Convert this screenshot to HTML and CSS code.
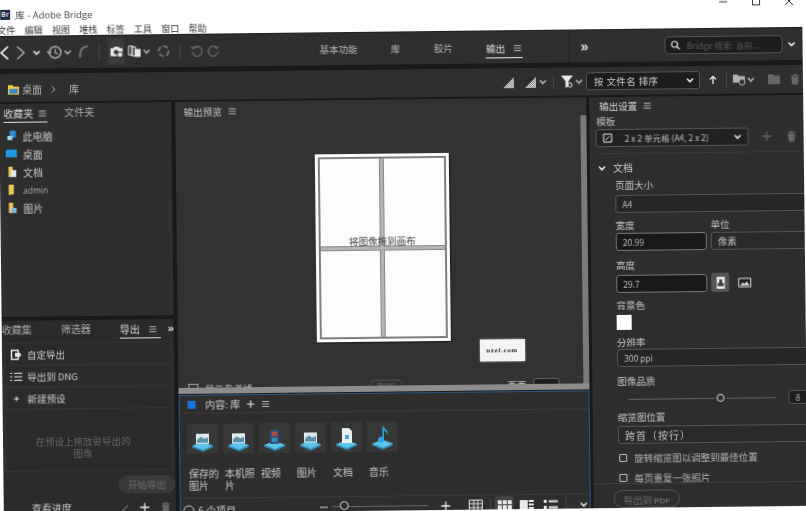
FILE: index.html
```html
<!DOCTYPE html>
<html lang="zh-CN">
<head>
    <meta charset="UTF-8">
    <title>库 - Adobe Bridge</title>
    <link rel="stylesheet" href="styles.css">
</head>
<body>
    <svg class="sprite" width="0" height="0">
        <defs>
            <pattern id="dither" width="2" height="2" patternUnits="userSpaceOnUse"><rect width="2" height="2" fill="#8a8a8a"/><rect width="1" height="1" fill="#d8d8d8"/><rect x="1" y="1" width="1" height="1" fill="#d8d8d8"/></pattern>
        </defs>
        <symbol id="chev" viewBox="0 0 10 10"><path d="M2 3.5 5 6.5 8 3.5" fill="none" stroke="currentColor" stroke-width="1.6"/></symbol>
        <symbol id="menu" viewBox="0 0 10 10"><path d="M1.5 2.5h7M1.5 5h7M1.5 7.5h7" fill="none" stroke="currentColor"/></symbol>
        <symbol id="plus" viewBox="0 0 12 12"><path d="M6 1.5v9M1.5 6h9" fill="none" stroke="currentColor" stroke-width="1.3"/></symbol>
        <symbol id="trash" viewBox="0 0 12 14"><path d="M1 3h10M4.5 3V1.5h3V3M2.2 4.5h7.6L9 13H3z" fill="currentColor" stroke="currentColor" stroke-width=".8"/></symbol>
        <symbol id="tile-base" viewBox="0 0 31 30"><path d="M5 22 15 18l11 4-10 4.5z" fill="#5cc4ec"/><path d="M5 22l11 4.5L26 22v1.5L16 28 5 23.5z" fill="#2b97c9"/></symbol>
    </svg>

    <div class="window">
        <div class="titlebar">
            <div class="title-row">
                <span class="app-badge">Br</span>
                <span>库 - Adobe Bridge</span>
            </div>
            <div class="menu-row">
                <span>文件</span><span>编辑</span><span>视图</span><span>堆栈</span><span>标签</span><span>工具</span><span>窗口</span><span>帮助</span>
            </div>
            <div class="win-controls">
                <svg width="10" height="10" viewBox="0 0 10 10"><path d="M1 5h8" stroke="#333"/></svg>
                <svg width="10" height="10" viewBox="0 0 10 10"><rect x="1.5" y="1.5" width="7" height="7" fill="none" stroke="#333"/></svg>
                <svg width="10" height="10" viewBox="0 0 10 10"><path d="M1 1l8 8M9 1l-8 8" stroke="#333"/></svg>
            </div>
        </div>

        <div class="toolbar">
            <div class="tools">
                <svg class="ic w16 bright" viewBox="0 0 10 14"><path d="M8 1.5 2 7l6 5.5" fill="none" stroke="currentColor" stroke-width="1.5"/></svg>
                <svg class="ic w16" viewBox="0 0 10 14"><path d="M2 1.5 8 7l-6 5.5" fill="none" stroke="currentColor" stroke-width="1.2"/></svg>
                <svg class="ic w10 bright"><use href="#chev"/></svg>
                <svg class="ic w16 hist" viewBox="0 0 14 14"><circle cx="7.5" cy="7" r="5" fill="none" stroke="currentColor" stroke-width="1.3"/><path d="M7.5 4v3.3l2.3 1.3M0 6l2.4 2L4 6" fill="none" stroke="currentColor"/></svg>
                <svg class="ic w10"><use href="#chev"/></svg>
                <svg class="ic w16 dim curve" viewBox="0 0 14 14"><path d="M11 2C6 2 3 6 4 12" fill="none" stroke="currentColor" stroke-width="1.8"/></svg>
                <span class="tool-div first"></span>
                <span class="tool-active">
                    <svg class="ic w14 bright" viewBox="0 0 14 13"><path d="M1 3h3l1-1.5h4L10 3h3v8H1z" fill="currentColor"/><circle cx="6.5" cy="7" r="2.3" fill="#333"/><circle cx="10.5" cy="9.5" r="2.8" fill="currentColor" stroke="#333"/></svg>
                </span>
                <svg class="ic w14 bright copies" viewBox="0 0 14 13"><path d="M1 1h4v9H1zM4 2h4v9H4z" fill="none" stroke="currentColor"/><path d="M7 4h6v8H7z" fill="currentColor"/></svg>
                <svg class="ic w10"><use href="#chev"/></svg>
                <svg class="ic w14 dim sync" viewBox="0 0 14 14"><circle cx="7" cy="7" r="5" fill="none" stroke="currentColor" stroke-width="2" stroke-dasharray="5 2.5"/></svg>
                <span class="tool-div second"></span>
                <svg class="ic w14 dim undo" viewBox="0 0 14 14"><path d="M3.5 4.5a5 5 0 1 1-1 3.5M1.5 2.5l2 2.5 2.5-1.5" fill="none" stroke="currentColor" stroke-width="1.2"/></svg>
                <svg class="ic w14 dim redo" viewBox="0 0 14 14"><path d="M10.5 4.5a5 5 0 1 0 1 3.5M12.5 2.5l-2 2.5L8 3.5" fill="none" stroke="currentColor" stroke-width="1.2"/></svg>
            </div>
            <div class="workspaces">
                <span class="ws">基本功能</span>
                <span class="ws lib">库</span>
                <span class="ws film">胶片</span>
                <span class="ws current">输出 <svg class="ic w10"><use href="#menu"/></svg></span>
            </div>
            <div class="more-cell"><span class="more">»</span></div>
            <div class="search">
                <svg class="ic w10 bright" viewBox="0 0 10 10"><circle cx="4" cy="4" r="3" fill="none" stroke="currentColor" stroke-width="1.2"/><path d="M6 6l3 3" stroke="currentColor" stroke-width="1.2"/></svg>
                <span>Bridge 搜索: 当前...</span>
            </div>
            <svg class="ic w10 bright search-more"><use href="#chev"/></svg>
        </div>

        <div class="pathbar">
            <div class="crumbs">
                <svg class="folder-ic" viewBox="0 0 14 12"><path d="M1 1h5l1 1.5h6V11H1z" fill="#f2c64f"/><rect x="2.5" y="5" width="9" height="5" fill="#2e8fc9"/></svg>
                <span>桌面</span>
                <svg class="ic w10 sep-chev" viewBox="0 0 10 10"><path d="M3.5 2 7 5 3.5 8" fill="none" stroke="currentColor"/></svg>
                <span class="crumb-lib">库</span>
            </div>
            <div class="path-tools">
                <svg class="ic w14 tri" viewBox="0 0 14 14"><path d="M1 13 12 2v11z" fill="url(#dither)"/></svg>
                <svg class="ic w14 tri2" viewBox="0 0 14 14"><path d="M1 13 12 2v11z" fill="url(#dither)"/></svg>
                <svg class="ic w10"><use href="#chev"/></svg>
                <span class="tool-div third"></span>
                <svg class="ic w14 bright" viewBox="0 0 14 14"><path d="M1 1h12L8.5 6.5V12L5.5 13V6.5z" fill="currentColor"/><circle cx="10" cy="10.5" r="2" fill="#2e2e2e" stroke="currentColor"/></svg>
                <svg class="ic w10"><use href="#chev"/></svg>
                <div class="sort-select"><span>按 文件名 排序</span><svg class="ic w10 bright"><use href="#chev"/></svg></div>
                <svg class="ic w10 bright up" viewBox="0 0 10 10"><path d="M5 9V2M2 4.5 5 1.5l3 3" fill="none" stroke="currentColor" stroke-width="1.3"/></svg>
                <span class="tool-div fourth"></span>
                <svg class="ic w14" viewBox="0 0 14 12"><path d="M1 1h5l1 1.5h6V9H1z" fill="currentColor"/><circle cx="10" cy="8.5" r="3" fill="#2e2e2e" stroke="currentColor"/></svg>
                <svg class="ic w10"><use href="#chev"/></svg>
                <svg class="ic w12 dim2 newfolder" viewBox="0 0 12 10"><path d="M0 0h5l1 1.5h6V10H0z" fill="currentColor"/></svg>
                <svg class="ic w12 dim2 pathtrash"><use href="#trash"/></svg>
            </div>
        </div>

        <div class="main">
            <div class="col-left">
                <section class="panel fav-panel">
                    <div class="tabs">
                        <span class="tab current">收藏夹 <svg class="ic w10"><use href="#menu"/></svg></span>
                        <span class="tab">文件夹</span>
                    </div>
                    <ul class="fav-list">
                        <li><svg class="fav-ic" viewBox="0 0 14 14"><path d="M5 1h7v8H5z" fill="#2f8fd4"/><path d="M2 7h6v5H2z" fill="#9fd4f2"/></svg>此电脑</li>
                        <li><svg class="fav-ic" viewBox="0 0 14 14"><rect x="0" y="2" width="13" height="9" fill="#1f9be6"/></svg>桌面</li>
                        <li><svg class="fav-ic" viewBox="0 0 14 14"><path d="M3 1h5v12H3z" fill="#f0c75e"/><path d="M6 5h6v8H6z" fill="#dfeaf5"/></svg>文档</li>
                        <li class="latin"><svg class="fav-ic" viewBox="0 0 14 14"><path d="M3 1h6v11l-6 1z" fill="#f0c75e"/></svg>admin</li>
                        <li><svg class="fav-ic" viewBox="0 0 14 14"><path d="M3 1h5v12H3z" fill="#f0c75e"/><path d="M6 7h6v6H6z" fill="#7fb5e0"/></svg>图片</li>
                    </ul>
                </section>
                <section class="panel export-panel">
                    <div class="tabs lower">
                        <span class="tab">收藏集</span>
                        <span class="tab">筛选器</span>
                        <span class="tab current">导出 <svg class="ic w10"><use href="#menu"/></svg></span>
                        <span class="more small">»</span>
                    </div>
                    <div class="export-box">
                        <div class="export-row"><svg class="ic w12 bright" viewBox="0 0 12 12"><path d="M8 3.5V1.5H1.5v9H8V8.5" fill="none" stroke="currentColor" stroke-width="1.5"/><path d="M5 4h3V2.5L11.5 6 8 9.5V8H5z" fill="currentColor"/></svg>自定导出</div>
                        <div class="export-row"><svg class="ic w12 bright" viewBox="0 0 12 12"><path d="M4 2.5h8M4 6h8M4 9.5h8M0 2.5h2M0 6h2M0 9.5h2" stroke="currentColor"/></svg>导出到 DNG</div>
                        <div class="export-row"><svg class="ic w12 bright" viewBox="0 0 12 12"><path d="M6 3.5v5M3.5 6h5" stroke="currentColor"/></svg>新建预设</div>
                        <p class="export-hint">在预设上拖放要导出的<br>图像</p>
                    </div>
                    <div class="export-action"><span class="pill">开始导出</span></div>
                    <div class="export-foot">
                        <span>查看进度</span>
                        <svg class="ic w10 pencil" viewBox="0 0 10 10"><path d="M2 9 8 3" stroke="currentColor" stroke-width="1.2"/></svg>
                        <svg class="ic w12 bright"><use href="#plus"/></svg>
                        <svg class="ic w12 dim2"><use href="#trash"/></svg>
                    </div>
                </section>
            </div>

            <div class="col-center">
                <section class="panel preview-panel">
                    <div class="panel-head">输出预览 <svg class="ic w10"><use href="#menu"/></svg></div>
                    <div class="canvas">
                        <div class="sheet">
                            <div class="sheet-grid"><i></i><i></i><i></i><i></i></div>
                            <span class="sheet-text">将图像拖到画布</span>
                        </div>
                        <div class="watermark">uzzf.com</div>
                    </div>
                    <div class="preview-foot">
                        <span class="check-dim"></span><span>显示参考线</span>
                        <span class="refresh">刷新</span>
                        <span class="page-label">页面</span><span class="page-box"></span>
                    </div>
                    <div class="scroll-v"></div>
                    <div class="scroll-h"></div>
                </section>
                <section class="content-panel">
                    <div class="content-head">
                        <span class="blue-mark"></span><span>内容: 库</span>
                        <svg class="ic w10 bright"><use href="#plus"/></svg>
                        <svg class="ic w10 head-menu"><use href="#menu"/></svg>
                    </div>
                    <div class="tiles">
                        <div class="tile"><div class="tile-box"><svg viewBox="0 0 31 30"><use href="#tile-base"/><path d="M9 10h13v10H9z" fill="#dfe9ee"/><path d="M10 16l4-3 3 2 4-1v5H10z" fill="#5a8fa5"/></svg></div><span>保存的图片</span></div>
                        <div class="tile"><div class="tile-box"><svg viewBox="0 0 31 30"><use href="#tile-base"/><path d="M9 10h13v10H9z" fill="#dfe9ee"/><path d="M10 16l4-3 3 2 4-1v5H10z" fill="#5a8fa5"/></svg></div><span>本机照片</span></div>
                        <div class="tile"><div class="tile-box"><svg viewBox="0 0 31 30"><use href="#tile-base"/><path d="M11 7h9v14h-9z" fill="#34527c"/><path d="M13 9h5v4h-5z" fill="#b8483b"/><path d="M13 15h5v4h-5z" fill="#2f8ec4"/></svg></div><span>视频</span></div>
                        <div class="tile"><div class="tile-box"><svg viewBox="0 0 31 30"><use href="#tile-base"/><path d="M9 10h13v10H9z" fill="#dfe9ee"/><path d="M10 16l4-3 3 2 4-1v5H10z" fill="#5a8fa5"/></svg></div><span>图片</span></div>
                        <div class="tile"><div class="tile-box"><svg viewBox="0 0 31 30"><use href="#tile-base"/><path d="M11 6h7l3 3v12H11z" fill="#e8f1f6"/><path d="M14 13h4v4h-4z" fill="#4ba6d6"/></svg></div><span>文档</span></div>
                        <div class="tile"><div class="tile-box"><svg viewBox="0 0 31 30"><use href="#tile-base"/><path d="M17 5v13a3 3 0 1 1-1.5-2.5V5z M17 5c1 3 5 4 4 9-1-3-2-4-4-5z" fill="#2ba7e0"/></svg></div><span>音乐</span></div>
                    </div>
                    <div class="content-foot">
                        <svg class="ic w12 ring" viewBox="0 0 12 12"><circle cx="6" cy="6" r="5" fill="none" stroke="currentColor"/></svg>
                        <span class="count">6 个项目</span>
                        <svg class="ic w12 minus" viewBox="0 0 12 12"><path d="M2 6h8" stroke="currentColor" stroke-width="1.3"/></svg>
                        <div class="zoom-slider"><span class="zoom-thumb"></span></div>
                        <svg class="ic w12 bright zoom-plus"><use href="#plus"/></svg>
                        <svg class="ic w14 bright grid-a" viewBox="0 0 14 12"><path d="M.5.5h13v11H.5zM.5 4h13M.5 8h13M5 .5v11M9 .5v11" fill="none" stroke="currentColor"/></svg>
                        <span class="tool-div fifth"></span>
                        <span class="view-active"><svg class="ic w14 bright" viewBox="0 0 14 12"><path d="M0 1h4v4H0zM5 1h4v4H5zM10 1h4v4h-4zM0 6h4v4H0zM5 6h4v4H5zM10 6h4v4h-4z" fill="currentColor"/></svg></span>
                        <svg class="ic w14 bright view-b" viewBox="0 0 14 12"><path d="M0 1h8v9H0zM9 1h5v2H9zM9 4.5h5v2H9zM9 8h5v2H9z" fill="currentColor"/></svg>
                        <svg class="ic w14 bright view-c" viewBox="0 0 14 12"><path d="M0 1h3v3H0zM5 1.5h9v2H5zM0 7h3v3H0zM5 7.5h9v2H5z" fill="currentColor"/></svg>
                        <span class="tool-div sixth"></span>
                        <svg class="ic w10 bright"><use href="#chev"/></svg>
                    </div>
                </section>
            </div>

            <section class="panel col-right">
                <div class="right-head">输出设置 <svg class="ic w10"><use href="#menu"/></svg></div>
                <div class="label tpl-label">模板</div>
                <div class="tpl-row">
                    <div class="field tpl-select">
                        <svg class="ic w10 bright" viewBox="0 0 10 10"><path d="M1 1h8v8H1z" fill="none" stroke="currentColor"/><path d="M3 7l3.5-3.5" stroke="currentColor"/></svg>
                        <span>2 x 2 单元格 (A4, 2 x 2)</span>
                        <svg class="ic w10 bright"><use href="#chev"/></svg>
                    </div>
                    <svg class="ic w12 dim2 tpl-plus"><use href="#plus"/></svg>
                    <svg class="ic w12 dim2 tpl-trash"><use href="#trash"/></svg>
                </div>
                <div class="section-title"><svg class="ic w10 bright"><use href="#chev"/></svg>文档</div>
                <div class="settings">
                    <div class="label">页面大小</div>
                    <div class="field wide"><span>A4</span></div>
                    <div class="pair">
                        <div class="cell-a"><div class="label">宽度</div><div class="field dark"><span>20.99</span></div></div>
                        <div class="cell-b"><div class="label">单位</div><div class="field plain"><span>像素</span></div></div>
                    </div>
                    <div class="label height-label">高度</div>
                    <div class="height-row">
                        <div class="field dark"><span>29.7</span></div>
                        <span class="orient active"><svg viewBox="0 0 12 12"><path d="M2 0h8v12H2z" fill="#eee"/><path d="M4.5 2.5h3V6h1.500v3.500H3V6h1.500z" fill="#444"/></svg></span>
                        <span class="orient"><svg viewBox="0 0 14 12"><path d="M.5 1.5h13v9H.5z" fill="#222" stroke="#eee"/><path d="M2 9l3-3 2 1.5L9 5l3 4z" fill="#eee"/></svg></span>
                    </div>
                    <div class="label bg-label">背景色</div>
                    <div class="swatch"></div>
                    <div class="label res-label">分辨率</div>
                    <div class="field wide"><span>300 ppi</span></div>
                    <div class="label q-label">图像品质</div>
                    <div class="quality">
                        <div class="q-track"><span class="q-thumb"></span></div>
                        <div class="field q-value"><span>8</span></div>
                    </div>
                    <div class="label thumb-label">缩览图位置</div>
                    <div class="field wide plain-text"><span>跨首（按行）</span></div>
                    <div class="check-row first-check"><span class="checkbox"></span>旋转缩览图以调整到最佳位置</div>
                    <div class="check-row"><span class="checkbox"></span>每页重复一张照片</div>
                </div>
                <div class="right-foot"><span class="pill outline">导出到 <b>PDF</b></span></div>
            </section>
        </div>
    </div>
</body>
</html>
```

FILE: styles.css
```css
html, body {
    margin: 0;
    height: 100%;
    overflow: hidden;
    background: #fff;
}
body {
    font-family: "Noto Sans CJK SC", "Liberation Sans", sans-serif;
    font-size: 10px;
    color: #c8c8c8;
}
.sprite {
    position: absolute;
}
ul {
    list-style: none;
    margin: 0;
    padding: 0;
}

/* the whole screenshot sits slightly askew */
.window {
    width: 804px;
    height: 515px;
    transform: translate(-2px, 0) rotate(-0.65deg);
    transform-origin: 0 0;
    display: flex;
    flex-direction: column;
    background: #191919;
    filter: blur(0.4px);
}

.ic {
    flex: none;
    display: block;
    height: 12px;
    color: #b0b0b0;
}
.w10 { width: 10px; height: 10px; }
.w12 { width: 12px; height: 12px; }
.w14 { width: 14px; height: 14px; }
.w16 { width: 16px; height: 16px; }
.bright { color: #e8e8e8; }
.dim { color: #707070; }
.dim2 { color: #666; }

/* title bar */
.titlebar {
    height: 36px;
    background: #fff;
    color: #333;
    position: relative;
    flex: none;
}
.title-row {
    height: 24px;
    padding: 5px 0 0 2px;
    box-sizing: border-box;
    display: flex;
    align-items: center;
    gap: 5px;
    font-family: "Open Sans", "Noto Sans CJK SC", sans-serif;
    font-size: 9.5px;
    color: #444;
}
.app-badge {
    width: 10px;
    height: 10px;
    background: #1e2a4a;
    color: #ddd;
    font-size: 7px;
    line-height: 10px;
    font-weight: bold;
    text-indent: 1px;
}
.menu-row {
    display: flex;
    gap: 9.3px;
    margin-left: -1px;
    font-size: 9px;
    line-height: 13px;
    color: #333;
}
.win-controls {
    position: absolute;
    right: 8px;
    top: 5px;
    display: flex;
    gap: 23px;
}

/* top toolbar */
.toolbar {
    height: 33px;
    flex: none;
    display: flex;
    align-items: center;
    background: #2f2f2f;
    border-top: 1px solid #1f1f1f;
    box-sizing: border-box;
}
.tools {
    display: flex;
    align-items: center;
    width: 300px;
    box-sizing: border-box;
}
.tools .w16:first-child { margin-left: -2px; }
.tools .w10 { margin-left: 3px; }
.hist { margin-left: 5px; }
.tools .hist + .w10 { margin-left: 0; }
.curve { margin-left: 3px; }
.tool-div {
    flex: none;
    width: 1px;
    height: 15px;
    background: #484848;
}
.tool-div.first { margin-left: 7px; }
.tool-active {
    margin-left: 8px;
    width: 17px;
    height: 26px;
    background: #3b3b3b;
    display: flex;
    align-items: center;
    justify-content: center;
}
.copies { margin-left: 3px; }
.tools .copies + .w10 { margin-left: 0; }
.sync { margin-left: 5px; }
.tool-div.second { margin-left: 9px; }
.undo { margin-left: 9px; }
.redo { margin-left: 3px; }

.workspaces {
    display: flex;
    align-items: center;
    height: 100%;
    width: 271px;
    padding-left: 21px;
    box-sizing: border-box;
    border-right: 1px solid #232323;
    font-size: 9.5px;
    color: #b8b8b8;
}
.ws { white-space: nowrap; }
.lib { margin-left: 33px; }
.film { margin-left: 34px; }
.ws.current {
    margin-left: 32px;
    color: #e4e4e4;
    display: flex;
    gap: 7px;
    align-items: center;
    height: 19px;
    border-bottom: 1.5px solid #eee;
    padding: 0 0 0 1px;
    margin-top: 2px;
}
.more-cell {
    width: 95px;
    padding-left: 11px;
    box-sizing: border-box;
}
.more {
    font-family: "Liberation Sans", sans-serif;
    font-weight: bold;
    font-size: 14px;
    line-height: 14px;
    color: #e0e0e0;
}
.search {
    width: 118px;
    height: 18px;
    box-sizing: border-box;
    background: #1d1d1d;
    border: 1px solid #555;
    border-radius: 4px;
    display: flex;
    align-items: center;
    gap: 6px;
    padding-left: 5px;
    color: #5c5c5c;
    font-size: 8.5px;
    white-space: nowrap;
}
.search-more { margin-left: 4px; }

/* path bar */
.pathbar {
    height: 28px;
    margin-top: 5px;
    flex: none;
    background: #2f2f2f;
    display: flex;
    align-items: center;
    justify-content: space-between;
}
.crumbs {
    display: flex;
    align-items: center;
    padding: 3px 0 0 8px;
    gap: 2px;
    font-size: 10px;
    color: #b8b8b8;
}
.folder-ic { width: 13px; height: 12px; }
.sep-chev { margin-left: 4px; }
.crumb-lib { margin-left: 9px; }
.path-tools {
    display: flex;
    align-items: center;
    padding-right: 2px;
}
.tri2 { margin-left: 8px; }
.tool-div.third { margin: 0 6px 0 5px; }
.sort-select {
    flex: none;
    width: 114px;
    height: 18px;
    margin-left: 2px;
    box-sizing: border-box;
    background: #1d1d1d;
    border: 1px solid #555;
    border-radius: 3px;
    display: flex;
    align-items: center;
    justify-content: space-between;
    padding: 0 4px 0 7px;
    font-size: 9.5px;
    letter-spacing: .4px;
}
.up { margin-left: 8px; }
.tool-div.fourth { margin: 0 5px 0 8px; }
.newfolder { margin-left: 12px; }
.pathtrash { margin-left: 9px; }

/* panels */
.main {
    flex: 1;
    margin-top: 2px;
    min-height: 0;
    display: grid;
    grid-template-columns: 172px 411px 214px;
    column-gap: 3.5px;
}
.panel {
    background: #2e2e2e;
    position: relative;
}
.col-left {
    display: flex;
    flex-direction: column;
    gap: 4px;
    min-height: 0;
}
.fav-panel {
    height: 213px;
    flex: none;
}
.tabs {
    display: flex;
    gap: 17px;
    padding: 2px 0 0 4px;
    font-size: 10px;
    height: 19px;
    box-sizing: border-box;
    align-items: flex-start;
}
.tab {
    display: flex;
    align-items: center;
    gap: 4px;
    line-height: 14px;
    color: #a8a8a8;
    white-space: nowrap;
}
.tab.current {
    color: #d8d8d8;
    height: 16px;
    border-bottom: 1px solid #ddd;
}
.fav-list {
    margin: 2px 2px 0;
    height: 185px;
    padding-top: 1px;
    border: 1px solid #333;
    box-sizing: border-box;
}
.fav-list li {
    height: 18px;
    display: flex;
    align-items: center;
    padding-left: 3px;
    gap: 5px;
    font-size: 10px;
}
.fav-ic {
    width: 12px;
    height: 12px;
    flex: none;
}
.fav-list .latin {
    font-family: "Open Sans", sans-serif;
    font-size: 8.5px;
    color: #a5a5b5;
}

.export-panel {
    flex: 1;
    min-height: 0;
    overflow: hidden;
    background: #2b2b2b;
}
.tabs.lower {
    gap: 0;
    padding: 2px 0 0 0;
    height: 22px;
}
.tabs.lower .tab:nth-child(2) { margin-left: 29px; }
.tabs.lower .tab:nth-child(3) { margin-left: 29px; gap: 8px; padding-right: 3px; }
.more.small { margin-left: 7px; font-size: 11px; }
.export-box {
    height: 129px;
    margin: 0 2px;
    border: 1px solid #343434;
    box-sizing: border-box;
}
.export-row {
    height: 21px;
    display: flex;
    align-items: center;
    gap: 5px;
    padding-left: 5px;
    border-bottom: 1px solid #363636;
    color: #c8c8c8;
    font-size: 9.5px;
}
.export-hint {
    margin: 26px 0 0;
    padding-right: 12px;
    text-align: center;
    color: #666;
    line-height: 12px;
    font-size: 9.5px;
}
.export-action {
    display: flex;
    justify-content: flex-end;
    padding: 5px 0 0;
}
.pill {
    display: block;
    width: 57px;
    height: 18px;
    line-height: 18px;
    text-align: center;
    border-radius: 9px;
    background: #3b3b3b;
    color: #6c6c6c;
    font-size: 9.5px;
}
.export-foot {
    display: flex;
    align-items: center;
    gap: 9px;
    padding: 6px 0 0 28px;
    font-size: 10px;
    white-space: nowrap;
}
.pencil { margin-left: 39px; color: #777; }

.col-center {
    display: flex;
    flex-direction: column;
    gap: 1px;
    min-height: 0;
}
.preview-panel {
    height: 292px;
    flex: none;
    overflow: hidden;
    background: #323232;
}
.panel-head {
    height: 17px;
    padding: 2px 0 0 9px;
    display: flex;
    align-items: center;
    gap: 5px;
    font-size: 9.5px;
    box-sizing: border-box;
}
.canvas {
    height: 262px;
    padding: 37px 0 0 139px;
    box-sizing: border-box;
}
.sheet {
    width: 134px;
    height: 188px;
    box-sizing: border-box;
    background: #fcfcfc;
    padding: 3px;
    position: relative;
    box-shadow: 1px 1px 1px #1c1c1c;
}
.sheet-grid {
    height: 100%;
    box-sizing: border-box;
    border: 2px solid #777;
    background: #b4b4b4;
    display: grid;
    grid-template-columns: 1fr 1fr;
    grid-template-rows: 1fr 1fr;
    gap: 5px;
}
.sheet-grid i {
    background: #fcfcfc;
    outline: 1px solid #888;
}
.sheet-text {
    position: absolute;
    left: 0;
    right: 0;
    top: 80px;
    text-align: center;
    color: #444;
    font-size: 9.5px;
    line-height: 14px;
}
.watermark {
    position: absolute;
    left: 302px;
    top: 241px;
    width: 45px;
    height: 22px;
    background: #f4f4f4;
    color: #333;
    font-family: "Liberation Serif", serif;
    font-weight: bold;
    font-size: 7px;
    line-height: 22px;
    text-align: center;
    letter-spacing: .6px;
    box-shadow: 0 0 2px #bbb;
}
.preview-foot {
    display: flex;
    align-items: center;
    height: 16px;
    padding-left: 10px;
    gap: 7px;
    font-size: 9.5px;
}
.check-dim {
    width: 8px;
    height: 8px;
    border: 1px solid #aaa;
}
.refresh {
    margin-left: 110px;
    width: 32px;
    height: 12px;
    line-height: 12px;
    text-align: center;
    border: 1px solid #555;
    border-radius: 6px;
    color: #666;
}
.page-label { margin-left: 97px; }
.page-box {
    width: 24px;
    height: 12px;
    background: #1d1d1d;
    border: 1px solid #666;
    border-radius: 3px;
}
.scroll-v {
    position: absolute;
    right: 0;
    top: 18px;
    width: 6px;
    bottom: 6px;
    background: #7a7a7a;
}
.scroll-h {
    position: absolute;
    left: 0;
    right: 0;
    bottom: 0;
    height: 6px;
    background: #8c8c8c;
}

.content-panel {
    flex: 1;
    min-height: 0;
    overflow: hidden;
    background: #2e2e2e;
    border: 1px solid #2c5a86;
    border-bottom: 0;
}
.content-head {
    height: 17px;
    display: flex;
    align-items: center;
    gap: 5px;
    padding: 0 0 0 8px;
    border-bottom: 1px solid #3a3a3a;
    font-size: 10px;
    color: #d0d0d0;
}
.blue-mark {
    width: 8px;
    height: 8px;
    background: #1a73d8;
    margin-right: 5px;
}
.tiles {
    display: flex;
    padding: 10px 0 0 7px;
    height: 84px;
    box-sizing: border-box;
}
.tile {
    width: 36px;
    flex: none;
    font-size: 10px;
    line-height: 12px;
}
.tile-box {
    width: 31px;
    height: 30px;
    background: #373737;
    margin-bottom: 14px;
}
.tile-box svg { display: block; width: 31px; height: 30px; }
.tile span { display: block; width: 32px; padding-left: 2px; }
.content-foot {
    border-top: 1px solid #3a3a3a;
    height: 24px;
    display: flex;
    align-items: center;
    padding: 0 0 4px 2px;
    box-sizing: border-box;
}
.ring { color: #ccc; margin-top: 4px; }
.count { margin: 4px 0 0 4px; width: 120px; font-size: 10px; }
.minus { margin-left: 2px; }
.zoom-slider {
    width: 97px;
    height: 1px;
    margin-left: 2px;
    background: #666;
    position: relative;
}
.zoom-thumb {
    position: absolute;
    left: 8px;
    top: -5px;
    width: 7px;
    height: 7px;
    border: 1.5px solid #ddd;
    background: #2e2e2e;
    border-radius: 50%;
}
.zoom-plus { margin-left: 12px; }
.grid-a { margin-left: 17px; }
.tool-div.fifth { margin-left: 7px; }
.view-active {
    width: 20px;
    height: 17px;
    margin-left: 4px;
    border-radius: 3px;
    background: #444;
    display: flex;
    align-items: center;
    justify-content: center;
}
.view-b { margin-left: 6px; }
.view-c { margin-left: 10px; }
.tool-div.sixth { margin: 0 12px 0 8px; }

/* right column */
.col-right {
    overflow: hidden;
    padding-left: 7px;
    display: flex;
    flex-direction: column;
}
.right-head {
    height: 17px;
    padding-left: 3px;
    display: flex;
    align-items: center;
    gap: 5px;
    font-size: 9.5px;
    color: #d4d4d4;
}
.label {
    font-size: 9.5px;
    line-height: 14px;
    color: #c4c4c4;
}
.tpl-label { height: 15px; line-height: 15px; }
.tpl-row {
    display: flex;
    align-items: center;
    height: 18px;
    margin-left: -1px;
    padding-bottom: 6px;
    border-bottom: 1px solid #3a3a3a;
    box-sizing: content-box;
}
.field {
    height: 18px;
    box-sizing: border-box;
    border: 1px solid #565656;
    border-radius: 3px;
    background: #262626;
    display: flex;
    align-items: center;
    padding-left: 6px;
    font-size: 8.5px;
    color: #bebebe;
    flex: none;
}
.tpl-select {
    width: 153px;
    gap: 12px;
    font-size: 8.5px;
    background: #222;
    padding-right: 5px;
}
.tpl-select span { flex: 1; white-space: nowrap; }
.tpl-plus { margin-left: 12px; }
.tpl-trash { margin-left: 13px; }
.section-title {
    display: flex;
    align-items: center;
    gap: 6px;
    font-size: 10px;
    height: 21px;
    margin-top: 3px;
}
.settings {
    padding-left: 18px;
    flex: 1;
    min-height: 0;
    overflow: hidden;
}
.field.wide { width: 210px; }
.settings > .label:first-child { height: 17px; line-height: 14px; }
.pair {
    display: flex;
    gap: 4px;
    margin-top: 5px;
}
.pair .label { height: 15px; line-height: 14px; }
.field.dark { width: 91px; background: #191919; border-color: #777; }
.cell-b .field { width: 110px; }
.field.plain { font-size: 9.5px; background: #2a2a2a; }
.height-label { margin-top: 7px; height: 16px; }
.height-row {
    display: flex;
    align-items: center;
}
.orient {
    flex: none;
    width: 18px;
    height: 19px;
    display: flex;
    align-items: center;
    justify-content: center;
    margin-left: 6px;
    border-radius: 2px;
}
.orient svg { width: 13px; height: 12px; }
.orient.active { background: #555; margin-left: 4px; }
.bg-label { margin-top: 5px; }
.swatch {
    width: 15px;
    height: 15px;
    background: #fff;
    margin-top: 3px;
}
.res-label { margin-top: 5px; height: 14px; }
.q-label { margin-top: 7px; }
.quality {
    display: flex;
    align-items: center;
    margin-top: 3px;
    height: 16px;
}
.q-track {
    flex: none;
    width: 147px;
    height: 1px;
    margin-left: 11px;
    background: #666;
    position: relative;
}
.q-thumb {
    position: absolute;
    left: 88px;
    top: -4px;
    width: 6px;
    height: 6px;
    background: #2e2e2e;
    border: 1.5px solid #ddd;
    border-radius: 50%;
    box-shadow: 0 0 0 2px #2e2e2e;
}
.field.q-value {
    margin-left: 13px;
    width: 30px;
    height: 14px;
    background: #1d1d1d;
}
.thumb-label { margin-top: 3px; height: 16px; }
.plain-text { font-size: 10px; letter-spacing: 1px; background: #2a2a2a; }
.check-row {
    display: flex;
    align-items: center;
    gap: 7px;
    height: 20px;
    padding-left: 1px;
    font-size: 9.5px;
    color: #b4b4b4;
    white-space: nowrap;
}
.first-check { margin-top: 4px; }
.checkbox {
    width: 6px;
    height: 6px;
    border: 1.5px solid #c0c0c0;
    border-radius: 1px;
    flex: none;
}
.right-foot {
    flex: none;
    height: 25px;
    margin-left: -7px;
    padding: 6px 0 0 20px;
    box-sizing: border-box;
    border-top: 1px solid #3e3e3e;
    background: #2e2e2e;
}
.pill.outline {
    width: 66px;
    background: transparent;
    border: 1px solid #555;
    box-sizing: border-box;
    color: #6c6c6c;
}
.pill.outline b { font-family: "Liberation Sans", sans-serif; font-size: 8px; }
```
